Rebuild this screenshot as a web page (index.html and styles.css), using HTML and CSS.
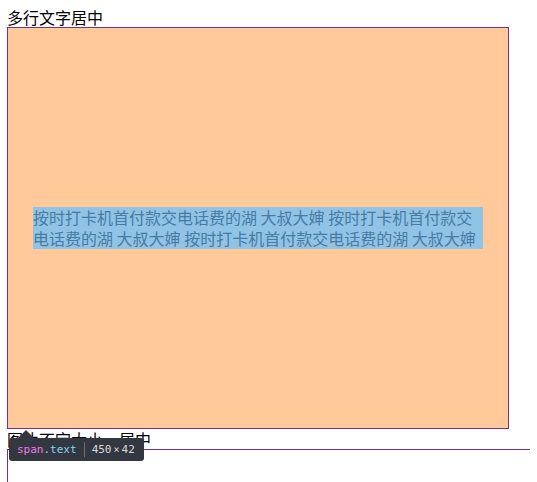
FILE: index.html
```html
<!DOCTYPE html>
<html>
<head>
<meta charset="utf-8">
<link rel="stylesheet" href="styles.css">
</head>
<body>
<div class="title">多行文字居中</div>
<div class="box">
  <span class="text">按时打卡机首付款交电话费的湖 大叔大婶 按时打卡机首付款交电话费的湖 大叔大婶 按时打卡机首付款交电话费的湖 大叔大婶</span>
</div>
<div class="title">图片不定大小，居中</div>
<div class="box2"></div>
<div class="tip">
  <span class="tag">span</span><span class="cls">.text</span><span class="sep"></span><span class="dim">450<span class="x">×</span>42</span>
</div>
</body>
</html>
```
FILE: styles.css
```css
body {
  margin: 7px 7px 0;
  font-family: "Noto Sans CJK SC", "Microsoft YaHei", sans-serif;
  font-size: 16px;
  color: #000;
}
.title {
  height: 20px;
  line-height: 20px;
  white-space: nowrap;
}
.box {
  width: 500px;
  height: 400px;
  border: 1px solid #7030a0;
  background: #ffc999;
  display: flex;
  align-items: center;
  justify-content: center;
}
.text {
  display: inline-block;
  width: 450px;
  line-height: 21px;
  background: #8fc4e6;
  color: #4a7aa2;
}
.box2 {
  height: 32px;
  margin-right: -7px;
  border-top: 1px solid #7030a0;
  border-left: 1px solid #7030a0;
}
.tip {
  position: absolute;
  left: 9px;
  top: 438px;
  height: 23px;
  padding: 0 9px 0 8px;
  background: #333740;
  border-radius: 3px;
  display: flex;
  align-items: center;
  font-family: "DejaVu Sans Mono", monospace;
  font-size: 11px;
  white-space: nowrap;
}
.tip::before {
  content: "";
  position: absolute;
  left: 9px;
  top: -8px;
  border-left: 8px solid transparent;
  border-right: 8px solid transparent;
  border-bottom: 8px solid #333740;
}
.tag {
  color: #f07ae8;
}
.cls {
  color: #8ad3f5;
}
.sep {
  width: 1px;
  height: 15px;
  background: #6a6d73;
  margin: 0 7px;
}
.dim {
  color: #d9d9d9;
}
.x {
  font-size: 10px;
  margin: 0 2px;
}
```
